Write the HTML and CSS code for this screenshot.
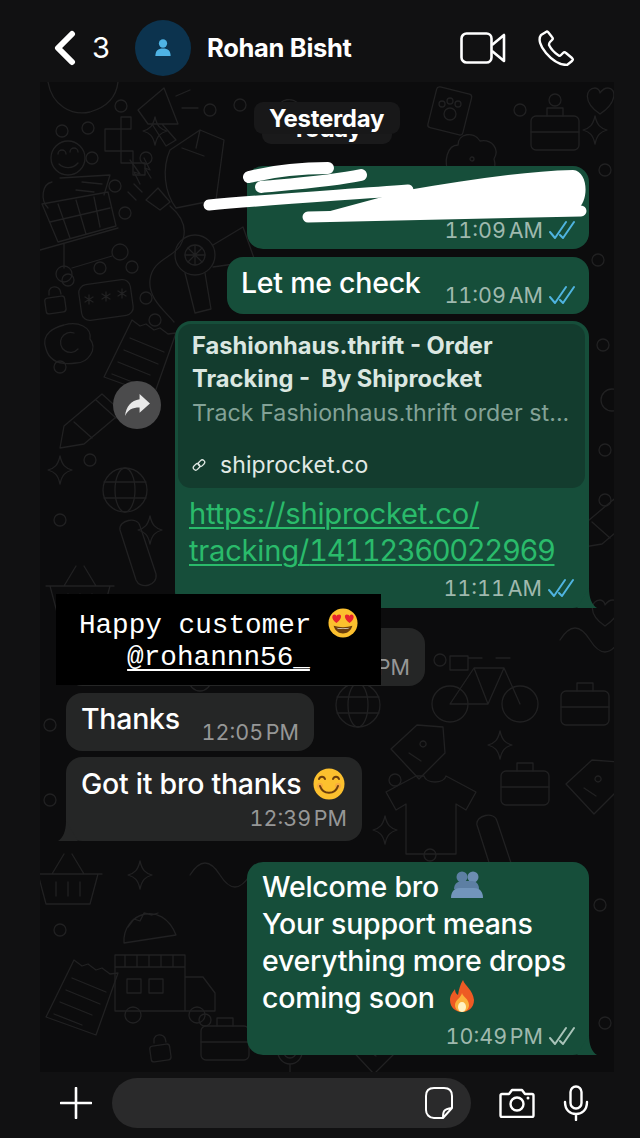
FILE: index.html
```html
<!DOCTYPE html>
<html lang="en">
<head>
<meta charset="utf-8">
<title>Rohan Bisht</title>
<link rel="stylesheet" href="styles.css">
</head>
<body>
<svg class="defs" width="0" height="0" aria-hidden="true">
  <defs>
    <symbol id="tick" viewBox="0 0 26 20" overflow="visible"><path d="M1 12l5 6L17 2M11 15l3 3L25 2" fill="none" stroke="currentColor" stroke-width="2" stroke-linecap="round" stroke-linejoin="round"/></symbol>
    <g id="d-ring"><circle r="6"/></g>
    <g id="d-big"><circle r="11"/></g>
    <g id="d-star"><path d="M0-14C2-5 5-2 12 0 5 2 2 5 0 14-2 5-5 2-12 0-5-2-2-5 0-14Z"/></g>
    <g id="d-pixel"><path d="M16 0h10v12H16zM0 12H16v22H0zM16 34h12v12H16zM28 46h12v12H28z"/></g>
    <g id="d-cart"><path d="M0 12 66 0M0 12l16 38 58-16-8-34M8 30l60-14M16 12l12 34M34 8l10 34M52 5l6 30M-2 58 76 36M22 52v24M30 76l40-12"/><circle cx="22" cy="82" r="8"/><circle cx="78" cy="60" r="8"/></g>
    <g id="d-person"><circle cx="18" cy="18" r="17"/><path d="M8 14a4 4 0 0 1 8 0M20 12a4 4 0 0 1 8 0M9 24c5 5 14 5 19-1M2 42c-10 2-12 18-4 26M10 38l50-3-6 20"/><path d="M32 42l20 2M26 50l18 2"/></g>
    <g id="d-plug"><path d="M0 0l14 10 10-8-12-14ZM-4-8l-8-8M-10 0l-8-8M24 6c14 12 18 26 10 40-8 12-28 14-30 34-2 18 14 30 24 42"/><path d="M-16-40l10 14-6-2 6 12M-2-42l6 12-5-2 6 10"/></g>
    <g id="d-lock"><rect x="-10" y="-5" width="20" height="16" rx="3" transform="rotate(-8)"/><path d="M-6-7v-4a6 6 0 0 1 11-1l1 4"/></g>
    <g id="d-keys"><rect x="-26" y="-18" width="52" height="36" rx="8" transform="rotate(-8)"/><path d="M-17 4v-9M-21-3l8 5M-21 2l8-5M0 1v-9M-4-6l8 5M-4-1l8-5M16-2v-9M12-9l8 5M12-4l8-5"/></g>
    <g id="d-egg"><path d="M-20 8c-6-16 10-22 18-24 14-4 28 2 26 14 8 10-2 24-14 24-14 2-26 0-30-14Z"/><path d="M8-8A10 10 0 1 0 12 8"/></g>
    <g id="d-receipt"><path d="M24 0l8 6 6-2 8 6 6-2 8 6 8-1-22 62-50-18Z"/><path d="M22 18l34 14M16 30l34 14M10 42l32 13M4 54l28 11"/></g>
    <g id="d-pencil"><path d="M-28 6 10-26l20 18-38 32-24 4ZM4-20l20 18M-18 2l18 16"/></g>
    <g id="d-bag"><path d="M0 20 30 0l24 10-8 60-40 8c-12-16-14-40-6-58ZM12 18l22 8M30 0l-4 18"/></g>
    <g id="d-mega"><path d="M0 22 26 0l14 36-30 0ZM14 36l14 22 10-6-14-16M38 8l14-6M44 20l16 0"/></g>
    <g id="d-paw"><rect x="-18" y="-20" width="36" height="42" rx="3" transform="rotate(14)"/><circle r="6" cy="4"/><circle r="3" cx="-8" cy="-6"/><circle r="3" cy="-9"/><circle r="3" cx="8" cy="-6"/></g>
    <g id="d-heart"><path d="M0 14C-18 2-14-12-5-12-2-12 0-9 0-7 2-10 5-12 8-12 16-12 18 2 0 14Z"/></g>
    <g id="d-globe"><circle r="22"/><ellipse rx="10" ry="22"/><path d="M-21-8 21-8M-21 8 21 8"/></g>
    <g id="d-bike"><circle cx="-34" cy="24" r="18"/><circle cx="36" cy="24" r="18"/><path d="M-34 24-10-12h30l16 36M-10-12 4 24h-38M4 24l16-36M-16-22h14M12-22h14M-34-24h18v14h-18z"/></g>
    <g id="d-shirt"><path d="M-14-34-44-18l10 18 10-6v50h50V-6l10 6 10-18-30-16c-2 8-20 8-22 0Z"/></g>
    <g id="d-truck"><path d="M-40-30H30V26h-70ZM30-8h18l12 16v18H30M-40-18h70M-30-30v12M-18-30v12M-6-30v12M6-30v12M18-30v12"/><rect x="-28" y="-6" width="14" height="14"/><rect x="-6" y="-6" width="14" height="14"/><circle cx="-22" cy="30" r="8"/><circle cx="42" cy="30" r="8"/></g>
    <g id="d-basket"><path d="M-30-4H30L22 26H-22ZM-34-4H34M-16-4-4-24M16-4 4-24M-12 4v14M0 4v14M12 4v14"/></g>
    <g id="d-case"><rect x="-24" y="-14" width="48" height="34" rx="5"/><path d="M-8-14v-8H8v8M-24 2H24"/></g>
    <g id="d-dog"><path d="M-20 20c-8-14-2-30 8-30 0-12 16-14 22-4 12-2 20 8 14 18 4 12-6 20-16 16"/><circle cx="2" cy="4" r="2"/></g>
    <g id="d-tag"><path d="M-24-6 2-30l26 2 2 26-26 26ZM-6-2l12 8M8-14a3 3 0 1 0 .1 0"/></g>
    <g id="d-taco"><path d="M-26 18C-28-12 12-26 26 10ZM-22 2l6-8 6 2 4-8 8 2 6-2"/></g>
    <g id="d-mic"><rect x="-6" y="-16" width="12" height="22" rx="6"/><path d="M-12 0a12 12 0 0 0 24 0M0 12v8"/></g>
    <g id="d-clip"><path d="M-12 20-28-30C-30-40-10-44-8-34L8 14C10 26-8 30-12 20Z"/></g>
    <g id="d-wave"><path d="M-30 0c10-16 20-16 30 0s20 16 30 0"/></g>
    <g id="d-dryer"><circle r="20"/><circle r="10"/><path d="M0-10v20M-10 0h20M-7-7l14 14M-7 7l14-14M18-10l30-18 12 34-42 6M-10 18l10 40 16-4-6-36"/></g>
  </defs>
</svg>

<div class="screen">
  <header class="topbar">
    <svg class="back" viewBox="0 0 24 36"><path d="M19 4 5 18l14 14" fill="none" stroke="#fff" stroke-width="6" stroke-linecap="round" stroke-linejoin="round"/></svg>
    <span class="count">3</span>
    <span class="avatar">
      <svg viewBox="0 0 20 22" width="18" height="20"><circle cx="10" cy="6" r="4.600" fill="#4fb3e4"/><path d="M1.500 20c0-6 3-8.500 8.500-8.500s8.500 2.500 8.500 8.500Z" fill="#4fb3e4"/></svg>
    </span>
    <span class="name">Rohan Bisht</span>
    <span class="actions">
      <svg class="ic-video" viewBox="0 0 46 32"><rect x="1.500" y="1.500" width="30" height="29" rx="5" fill="none" stroke="#fff" stroke-width="2.600"/><path d="M32 13 44 3v26L32 19" fill="none" stroke="#fff" stroke-width="2.600" stroke-linejoin="round"/></svg>
      <svg class="ic-phone" viewBox="0 0 36 36"><path d="M8 2 3 5C0 9 2 16 8 23s14 12 21 12l5-4c1-1 1-2 0-3l-6-5c-1-1-2-1-3 0l-2 2c-1 1-2 1-3 0-3-2-7-6-9-10 0-1 0-2 1-3l2-2c1-1 1-2 0-3L10 2C9 1 9 1 8 2Z" fill="none" stroke="#fff" stroke-width="2.400" stroke-linejoin="round"/></svg>
    </span>
  </header>

  <main class="chat">
    <svg class="doodles" viewBox="40 82 574 990" aria-hidden="true">
      <path d="M48 82c4 24 24 34 42 30 14-4 26-12 28-30"/>
      <use href="#d-person" x="50" y="140"/>
      <use href="#d-cart" x="42" y="192"/>
      <use href="#d-pixel" x="105" y="117"/>
      <use href="#d-star" x="155" y="131"/>
      <use href="#d-mega" x="138" y="88"/>
      <use href="#d-plug" x="146" y="200"/>
      <use href="#d-bag" x="170" y="130"/>
      <use href="#d-dryer" x="195" y="255"/>
      <use href="#d-dog" x="290" y="120"/>
      <use href="#d-dog" x="470" y="155"/>
      <use href="#d-paw" x="450" y="110"/>
      <use href="#d-heart" x="600" y="100"/>
      <use href="#d-star" x="595" y="130"/>
      <use href="#d-case" x="555" y="130"/>
      <use href="#d-lock" x="55" y="302"/>
      <use href="#d-keys" x="106" y="300"/>
      <use href="#d-egg" x="66" y="341"/>
      <use href="#d-receipt" x="108" y="320"/>
      <use href="#d-pencil" x="92" y="420"/>
      <use href="#d-star" x="60" y="470"/>
      <use href="#d-globe" x="125" y="490"/>
      <use href="#d-star" x="150" y="530"/>
      <use href="#d-basket" x="80" y="590"/>
      <use href="#d-clip" x="148" y="560"/>
      <use href="#d-globe" x="358" y="705"/>
      <use href="#d-bike" x="484" y="680"/>
      <use href="#d-tag" x="415" y="755"/>
      <use href="#d-shirt" x="430" y="810"/>
      <use href="#d-star" x="385" y="830"/>
      <use href="#d-basket" x="68" y="878"/>
      <use href="#d-taco" x="150" y="925"/>
      <use href="#d-star" x="140" y="875"/>
      <use href="#d-truck" x="155" y="985"/>
      <use href="#d-receipt" x="50" y="960"/>
      <use href="#d-case" x="225" y="1040"/>
      <use href="#d-lock" x="160" y="1050"/>
      <use href="#d-mic" x="290" y="1052"/>
      <use href="#d-tag" x="370" y="1050"/>
      <use href="#d-clip" x="505" y="855"/>
      <use href="#d-case" x="585" y="705"/>
      <use href="#d-wave" x="590" y="640"/>
      <use href="#d-pencil" x="610" y="520"/>
      <use href="#d-heart" x="605" y="612"/>
      <use href="#d-tag" x="590" y="790"/>
      <use href="#d-case" x="525" y="785"/>
      <use href="#d-wave" x="220" y="875"/>
      <use href="#d-star" x="500" y="745"/>
      <use href="#d-big" x="200" y="680"/>
      <use href="#d-egg" x="180" y="800"/>
      <use href="#d-big" x="612" y="400"/>
      <use href="#d-ring" x="62" y="131"/>
      <use href="#d-ring" x="88" y="128"/>
      <use href="#d-ring" x="121" y="106"/>
      <use href="#d-ring" x="92" y="158"/>
      <use href="#d-ring" x="146" y="158"/>
      <use href="#d-ring" x="115" y="186"/>
      <use href="#d-ring" x="125" y="213"/>
      <use href="#d-ring" x="100" y="268"/>
      <use href="#d-ring" x="68" y="280"/>
      <use href="#d-ring" x="146" y="298"/>
      <use href="#d-ring" x="155" y="320"/>
      <use href="#d-ring" x="132" y="267"/>
      <use href="#d-ring" x="60" y="367"/>
      <use href="#d-ring" x="210" y="110"/>
      <use href="#d-ring" x="240" y="105"/>
      <use href="#d-ring" x="420" y="175"/>
      <use href="#d-ring" x="520" y="110"/>
      <use href="#d-ring" x="555" y="100"/>
      <use href="#d-ring" x="605" y="170"/>
      <use href="#d-ring" x="598" y="260"/>
      <use href="#d-ring" x="603" y="345"/>
      <use href="#d-ring" x="605" y="450"/>
      <use href="#d-ring" x="605" y="500"/>
      <use href="#d-ring" x="90" y="460"/>
      <use href="#d-ring" x="60" y="520"/>
      <use href="#d-ring" x="130" y="640"/>
      <use href="#d-ring" x="50" y="725"/>
      <use href="#d-ring" x="50" y="800"/>
      <use href="#d-ring" x="440" y="660"/>
      <use href="#d-ring" x="395" y="780"/>
      <use href="#d-ring" x="600" y="905"/>
      <use href="#d-ring" x="605" y="1023"/>
      <use href="#d-ring" x="430" y="855"/>
      <use href="#d-ring" x="60" y="930"/>
      <use href="#d-ring" x="205" y="1020"/>
      <use href="#d-big" x="220" y="820"/>
    </svg>

    <div class="dates">
      <span class="chip chip-back">Today</span>
      <span class="chip chip-front">Yesterday</span>
    </div>

    <div class="msg out m1">
      <div class="meta"><span>11:09 AM</span><svg class="tick read"><use href="#tick"/></svg></div>
      <svg class="scribble" viewBox="0 0 390 70" aria-hidden="true"><path d="M205 33C260 24 320 14 370 13 386 14 386 46 374 52L105 60Z" fill="#fff"/><path d="M46 20C70 14 100 11 125 11M58 30C90 27 130 24 158 18" fill="none" stroke="#fff" stroke-width="12" stroke-linecap="round"/><path d="M6 48C70 42 140 38 205 33M105 60C200 58 290 56 378 54" fill="none" stroke="#fff" stroke-width="11" stroke-linecap="round"/></svg>
    </div>

    <div class="msg out m2">
      <span class="text">Let me check</span>
      <div class="meta"><span>11:09 AM</span><svg class="tick read"><use href="#tick"/></svg></div>
    </div>

    <div class="msg out m3">
      <span class="forward"><svg viewBox="0 0 26 24" width="27" height="25"><path d="M15 1 25 10 15 19v-5C8 14 4 16 1 22 2 13 7 7 15 6Z" fill="#e8e8e8"/></svg></span>
      <div class="preview">
        <div class="p-title">Fashionhaus.thrift - Order Tracking -&nbsp; By Shiprocket</div>
        <div class="p-desc">Track Fashionhaus.thrift order st...</div>
        <div class="p-site">
          <svg viewBox="0 0 16 16" width="14" height="14"><g fill="none" stroke="#dfe8e3" stroke-width="1.500"><rect x="1" y="7.500" width="8" height="5.500" rx="2.700" transform="rotate(-45 5 10)"/><rect x="7" y="3" width="8" height="5.500" rx="2.700" transform="rotate(-45 11 6)"/></g></svg>
          <span>shiprocket.co</span>
        </div>
      </div>
      <a class="link">https://shiprocket.co/<br>tracking/<span class="digits">14112360022969</span></a>
      <div class="meta"><span>11:11 AM</span><svg class="tick read"><use href="#tick"/></svg></div>
      <svg class="tail tail-out" viewBox="0 0 20 20"><path d="M12 0C12 10 15 17 20 20H0Z" fill="#164e3a"/></svg>
    </div>

    <div class="msg in m4">
      <div class="meta"><span>12:01 PM</span></div>
    </div>

    <div class="msg in m5">
      <span class="text">Thanks</span>
      <div class="meta"><span>12:05 PM</span></div>
    </div>

    <div class="msg in m6">
      <div class="text line">Got it bro thanks
        <svg class="emoji" viewBox="0 0 32 32"><circle cx="16" cy="16" r="15.500" fill="#fcc02e"/><circle cx="7" cy="18" r="3" fill="#f49a4a" opacity=".6"/><circle cx="25" cy="18" r="3" fill="#f49a4a" opacity=".6"/><path d="M6 11c1-3 5-3 6 0M20 11c1-3 5-3 6 0" fill="none" stroke="#6b3d0c" stroke-width="2" stroke-linecap="round"/><path d="M7 18c3 9 15 9 18 0" fill="none" stroke="#6b3d0c" stroke-width="2" stroke-linecap="round"/></svg>
      </div>
      <div class="meta"><span>12:39 PM</span></div>
      <svg class="tail tail-in" viewBox="0 0 20 20"><path d="M8 0C8 10 5 17 0 20H20Z" fill="#252626"/></svg>
    </div>

    <div class="msg out m7">
      <div class="text">Welcome bro
        <svg class="emoji hug" viewBox="0 0 34 28"><circle cx="12" cy="6" r="5.500" fill="#5d7fa3"/><circle cx="23" cy="6" r="5.500" fill="#6c8db1"/><path d="M4 18c0-6 5-8 8-8h10c4 0 7 3 7 8Z" fill="#5d7fa3"/><path d="M1 27c0-6 3-10 9-10h14c6 0 9 4 9 10Z" fill="#7295bb"/></svg>
        <br>Your support means<br>everything more drops<br>coming soon
        <svg class="emoji fire" viewBox="0 0 28 34"><path d="M15 1c2 6 10 10 11 20 0 8-6 12-12 12S2 29 2 21c0-5 3-8 5-11 0 3 1 5 3 6 1-6 2-10 5-15Z" fill="#ee5a24"/><path d="M14 14c1 4 7 6 7 12 0 4-3 7-7 7s-7-3-7-7c0-5 6-7 7-12Z" fill="#fbb03b"/><ellipse cx="14" cy="28" rx="4" ry="5" fill="#fff3c4"/></svg>
      </div>
      <div class="meta"><span>10:49 PM</span><svg class="tick"><use href="#tick"/></svg></div>
      <svg class="tail tail-out" viewBox="0 0 20 20"><path d="M12 0C12 10 15 17 20 20H0Z" fill="#164e3a"/></svg>
    </div>

    <div class="sticker">
      <span>Happy customer
        <svg class="emoji love" viewBox="0 0 32 32"><circle cx="16" cy="16" r="15.500" fill="#fcc02e"/><path d="M6 19c3 11 17 11 20 0-6 2-14 2-20 0Z" fill="#6b3d0c"/><path d="M9 21c4 1 10 1 14 0-1 2-13 2-14 0Z" fill="#fff"/><path d="M9 16C3 12 4 7 7 7c1 0 2 1 2 2 0-1 1-2 3-2 3 0 3 5-3 9ZM23 16c-6-4-6-9-3-9 2 0 3 1 3 2 0-1 1-2 2-2 3 0 4 5-2 9Z" fill="#e8232e"/></svg>
      </span>
      <a class="handle">@rohannn56_</a>
    </div>
  </main>

  <footer class="composer">
    <svg class="ic-plus" viewBox="0 0 32 32"><path d="M16 1v30M1 16h30" stroke="#fff" stroke-width="2.600" stroke-linecap="round"/></svg>
    <div class="input">
      <svg class="ic-sticker" viewBox="0 0 30 34"><path d="M19 32H10C5 32 2 28 2 24V10c0-5 3-8 8-8h10c5 0 8 3 8 8v12Zm0 0c0-6 0-9 9-10" fill="none" stroke="#fff" stroke-width="2" stroke-linejoin="round"/></svg>
    </div>
    <svg class="ic-camera" viewBox="0 0 36 30"><path d="M3 6h7l3-4h10l3 4h7a1.500 1.500 0 0 1 1.500 1.500v20a1.500 1.500 0 0 1-1.500 1.500H3a1.500 1.500 0 0 1-1.500-1.500v-20A1.500 1.500 0 0 1 3 6Z" fill="none" stroke="#fff" stroke-width="2.400" stroke-linejoin="round"/><circle cx="18" cy="16" r="6.500" fill="none" stroke="#fff" stroke-width="2.400"/><circle cx="29" cy="10" r="1.500" fill="#fff"/></svg>
    <svg class="ic-mic" viewBox="0 0 26 36"><rect x="7.500" y="1.500" width="11" height="22" rx="5.500" fill="none" stroke="#fff" stroke-width="2.400"/><path d="M2 17c0 8 5 12 11 12s11-4 11-12M13 29v6" fill="none" stroke="#fff" stroke-width="2.400" stroke-linecap="round"/></svg>
  </footer>
</div>
</body>
</html>
```
FILE: styles.css
```css
* { box-sizing: border-box; }
html, body { margin: 0; padding: 0; }
body { background: #111112; color: #fff; font-family: Inter, "Liberation Sans", sans-serif; }
.defs { position: absolute; }
.screen { width: 640px; height: 1138px; display: flex; flex-direction: column; overflow: hidden; }

.topbar { height: 82px; flex: none; display: flex; align-items: center; padding: 13px 66px 0 53px; }
.back { width: 24px; height: 36px; flex: none; }
.count { margin-left: 15px; font-size: 29px; line-height: 36px; width: 28px; }
.avatar { margin-left: 15px; width: 56px; height: 56px; border-radius: 50%; background: #0c334e; display: flex; align-items: center; justify-content: center; flex: none; }
.name { margin-left: 16px; font-size: 25.500px; font-weight: 700; letter-spacing: -0.3px; }
.actions { margin-left: auto; display: flex; align-items: center; gap: 32px; }
.ic-video { width: 46px; height: 32px; }
.ic-phone { width: 36px; height: 36px; }

.chat { position: relative; flex: none; height: 990px; margin: 0 26px 0 40px; padding: 0 25px 0 26px; background: #0c0c0d; display: flex; flex-direction: column; overflow: visible; }
.doodles { position: absolute; inset: 0; width: 100%; height: 100%; fill: none; stroke: #212122; stroke-width: 1.300; stroke-linecap: round; stroke-linejoin: round; overflow: hidden; }

.dates { position: relative; align-self: center; margin: 30px 0 0 -2px; width: 146px; height: 31px; display: flex; justify-content: center; }
.chip { display: flex; align-items: center; justify-content: center; height: 32px; border-radius: 9px; font-size: 24px; font-weight: 700; letter-spacing: -0.3px; background: #1a1a1b; color: #fff; }
.chip-back { width: 130px; }
.chip-front { position: absolute; left: 0; top: -10px; width: 146px; z-index: 1; background: #181819; }

.msg { position: relative; flex: none; border-radius: 16px; font-size: 28.500px; font-weight: 500; line-height: 37px; letter-spacing: -0.25px; }
.out { align-self: flex-end; background: #164e3a; }
.in { align-self: flex-start; background: #252626; }

.meta { display: flex; align-items: center; justify-content: flex-end; gap: 6px; font-size: 21.500px; font-weight: 400; line-height: 26px; letter-spacing: 0; word-spacing: -3px; color: #9fb9ae; white-space: nowrap; font-variant-numeric: tabular-nums; }
.in .meta { color: #969797; }
.tick { width: 26px; height: 20px; color: #a9c4b9; flex: none; }
.tick.read { color: #4fb4e0; }

.m1 { width: 342px; height: 83px; margin-top: 23px; padding: 51px 14px 0 0; }
.scribble { position: absolute; left: -44px; top: -9px; width: 390px; height: 70px; }
.m2 { width: 362px; height: 57px; margin-top: 8px; padding: 7px 14px 0 14px; display: flex; justify-content: space-between; }
.m2 .meta { margin-top: 18px; align-self: flex-start; }
.m3 { width: 414px; height: 287px; margin-top: 7px; padding: 3px 4px 0 3px; }
.forward { position: absolute; left: -62px; top: 60px; width: 48px; height: 48px; border-radius: 50%; background: #4b4b4c; display: flex; align-items: center; justify-content: center; }
.preview { height: 164px; border-radius: 13px; background: #133c2e; padding: 5px 14px 0 14px; }
.p-title { font-size: 23.700px; line-height: 33px; font-weight: 700; color: #dbe7e1; letter-spacing: 0; width: 340px; }
.p-desc { font-size: 23.200px; line-height: 36px; font-weight: 400; color: #83a297; letter-spacing: 0.05px; white-space: nowrap; }
.p-site { margin-top: 19px; display: flex; align-items: center; gap: 14px; font-size: 23px; font-weight: 400; line-height: 30px; color: #e1e9e5; letter-spacing: 0.1px; }
.link { display: block; margin: 7px 0 0 11px; color: #2abb6b; text-decoration: underline; text-underline-offset: 3px; text-decoration-thickness: 2px; white-space: nowrap; font-size: 29.200px; font-weight: 400; }
.digits { font-variant-numeric: tabular-nums; letter-spacing: -1.400px; }
.m3 .meta { margin: 6px 11px 0 0; }

.m4 { width: 359px; height: 58px; margin-top: 20px; padding: 26px 15px 0 0; }
.m5 { width: 248px; height: 58px; margin-top: 7px; padding: 7px 15px 0 15px; display: flex; justify-content: space-between; }
.m5 .meta { margin-top: 19px; align-self: flex-start; }
.m6 { width: 296px; height: 84px; margin-top: 6px; padding: 8px 15px 0 15px; }
.m6 .meta { margin-top: 3px; }
.m7 { width: 342px; height: 193px; margin-top: 21px; padding: 6px 14px 0 15px; }
.m7 .meta { margin-top: 7px; }
.line { white-space: nowrap; display: flex; align-items: center; gap: 12px; }
.emoji { display: inline-block; width: 32px; height: 32px; vertical-align: -6px; }
.hug { width: 34px; height: 28px; margin-left: 4px; vertical-align: -2px; }
.fire { width: 28px; height: 34px; margin-left: 6px; vertical-align: -5px; }

.tail { position: absolute; width: 20px; height: 20px; bottom: 0; }
.tail-out { right: -8px; }
.tail-in { left: -8px; }

.sticker { position: absolute; left: 16px; top: 512px; width: 325px; height: 91px; z-index: 2; background: #000; display: flex; flex-direction: column; align-items: center; padding-top: 14px; font-family: "Liberation Mono", monospace; font-size: 27.700px; line-height: 32px; color: #fff; white-space: nowrap; }
.love { width: 30px; height: 30px; vertical-align: -5px; }
.handle { text-decoration: underline; text-underline-offset: 4px; }

.composer { flex: 1; display: flex; align-items: center; padding: 0 50px 4px 60px; }
.ic-plus { width: 32px; height: 32px; flex: none; }
.input { margin-left: 20px; width: 359px; height: 50px; border-radius: 25px; background: #2a2a2b; display: flex; align-items: center; justify-content: flex-end; padding-right: 17px; flex: none; }
.ic-sticker { width: 30px; height: 34px; }
.ic-camera { margin-left: 28px; width: 36px; height: 30px; flex: none; }
.ic-mic { margin-left: 28px; width: 26px; height: 36px; flex: none; }
```
